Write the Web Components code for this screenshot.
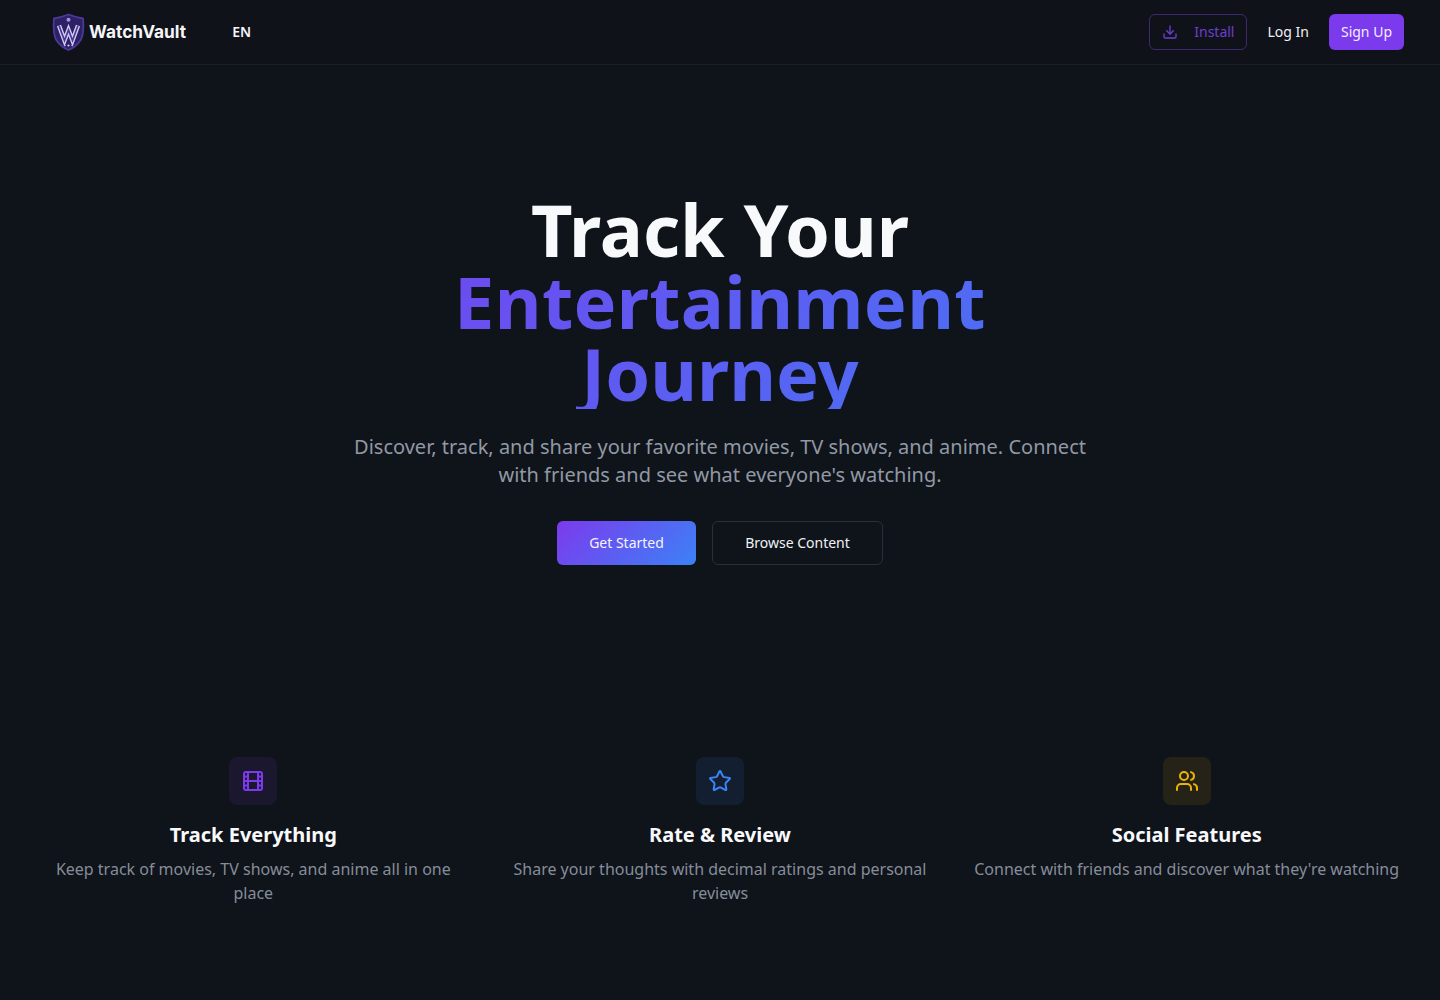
<!DOCTYPE html>
<html lang="en"><head><meta charset="utf-8"><title>WatchVault</title>
<style>
html,body{margin:0;background:#0f131a;color:#fff;font-family:"Noto Sans",sans-serif}
body{min-height:1000px}
</style></head><body>
<wv-header></wv-header>
<wv-hero></wv-hero>
<wv-features>
<wv-feature tone="purple" icon="film" heading="Track Everything">Keep track of movies, TV shows, and anime all in one place</wv-feature>
<wv-feature tone="blue" icon="star" heading="Rate &amp; Review">Share your thoughts with decimal ratings and personal reviews</wv-feature>
<wv-feature tone="amber" icon="users" heading="Social Features">Connect with friends and discover what they're watching</wv-feature>
</wv-features>
<script>
const def=(n,html)=>customElements.define(n,class extends HTMLElement{constructor(){super();this.attachShadow({mode:'open'}).innerHTML=typeof html==='function'?html(this):html;}});
def('wv-header',`<style>
:host{display:flex;align-items:center;justify-content:space-between;height:64px;border-bottom:1px solid #1a1f27;padding:0 36px 0 52px;background:#10121a;font-size:14px;line-height:20px}
.l,.r{display:flex;align-items:center}
.logo{display:flex;align-items:center;gap:4px;font:700 17.3px/20px Inter,sans-serif;color:#f5f5f7;margin-top:-1px}
.logo svg{display:block}
.en{margin-left:46px;font-weight:600;color:#f5f5f7;font-size:14px;margin-top:-1px}
.btn{box-sizing:border-box;height:36px;display:flex;align-items:center;border-radius:6px;padding-bottom:1px}
.install{width:98px;border:1px solid #3b2a6e;color:#6d3fd0;padding:0 12px 1px 12px;justify-content:space-between}
.login{margin-left:8px;padding:0 12px 1px;color:#f0f0f3}
.signup{margin-left:8px;padding:0 12px 1px;background:#7c3aed;color:#f3edff}
</style>
<div class="l"><div class="logo"><svg width="33" height="38" viewBox="0 0 33 38"><path d="M16.500 1.500C20.500 3 25.500 4.500 31 5.500c.8 9 .6 15.500-2 21-2.800 4.500-7.500 8.500-12.500 10.500C11.500 35 6.800 31 4 26.500 1.400 21 1.200 14.500 2 5.500c5.500-1 10.500-2.500 14.500-4z" fill="#2d2064" stroke="#4a3a96" stroke-width="1.800"/><path d="M7 12.500l5.500 15 4-10.500 4 10.500 5.500-15" fill="none" stroke="#d5ccf3" stroke-width="4.400" stroke-linejoin="miter"/><path d="M7 12.500l5.500 15 4-10.500 4 10.500 5.500-15" fill="none" stroke="#4a3a96" stroke-width="1.700" stroke-linejoin="miter"/><circle cx="16.500" cy="6.800" r="2" fill="#a68ff0"/><circle cx="16.500" cy="32.500" r="1.100" fill="#d5ccf3"/><circle cx="13.500" cy="32.500" r=".6" fill="#a68ff0"/><circle cx="19.500" cy="32.500" r=".6" fill="#a68ff0"/></svg><span>WatchVault</span></div><span class="en">EN</span></div>
<div class="r"><div class="btn install"><svg width="16" height="16" viewBox="0 0 24 24" fill="none" stroke="#6d3fd0" stroke-width="2" stroke-linecap="round" stroke-linejoin="round"><path d="M12 15V3"/><path d="M21 15v4a2 2 0 0 1-2 2H5a2 2 0 0 1-2-2v-4"/><path d="m7 10 5 5 5-5"/></svg><span>Install</span></div><div class="btn login">Log In</div><div class="btn signup">Sign Up</div></div>`);
def('wv-hero',`<style>
:host{display:block;text-align:center;padding:128px 0 0;height:692px;box-sizing:border-box}
h1{margin:0 auto;font-size:72px;line-height:72px;font-weight:700;color:#f8f9fa}
h1 span{display:block;width:1152px;margin:0 auto;background:linear-gradient(135deg,#7c3aed,#3b82f6);-webkit-background-clip:text;background-clip:text;color:transparent}
h1 b{font-weight:inherit;letter-spacing:.33px}
p{margin:24px auto 0;width:768px;font-size:20px;line-height:28px;color:#9199a5}
.cta{display:flex;justify-content:center;gap:16px;margin-top:32px}
.b{box-sizing:border-box;height:44px;display:flex;align-items:center;justify-content:center;border-radius:6px;font-size:14px;line-height:20px;padding-bottom:1px}
.p{width:139px;background:linear-gradient(135deg,#7c3aed,#3b82f6);color:#f5f3ff}
.s{width:171px;border:1px solid #2a2f38;color:#f0f2f5}
</style>
<h1>Track Your<span><b>Entertainment</b><br>Journey</span></h1>
<p>Discover, track, and share your favorite movies, TV shows, and anime. Connect with friends and see what everyone's watching.</p>
<div class="cta"><div class="b p">Get Started</div><div class="b s">Browse Content</div></div>`);
def('wv-features',`<style>:host{display:grid;grid-template-columns:repeat(3,1fr);gap:32px;padding:0 36px}</style><slot></slot>`);
const icons={
film:'<rect width="18" height="18" x="3" y="3" rx="2"/><path d="M7 3v18M3 7.500h4M3 12h18M3 16.500h4M17 3v18M17 7.500h4M17 16.500h4"/>',
star:'<path d="M11.525 2.295a.53.53 0 0 1 .95 0l2.31 4.679a2.123 2.123 0 0 0 1.595 1.160l5.166.756a.53.53 0 0 1 .294.904l-3.736 3.638a2.123 2.123 0 0 0-.611 1.878l.882 5.140a.53.53 0 0 1-.771.560l-4.618-2.428a2.122 2.122 0 0 0-1.973 0L6.396 21.010a.53.53 0 0 1-.77-.560l.881-5.139a2.122 2.122 0 0 0-.611-1.879L2.160 9.795a.53.53 0 0 1 .294-.906l5.165-.755a2.122 2.122 0 0 0 1.597-1.160z"/>',
users:'<path d="M16 21v-2a4 4 0 0 0-4-4H6a4 4 0 0 0-4 4v2"/><path d="M16 3.128a4 4 0 0 1 0 7.744"/><path d="M22 21v-2a4 4 0 0 0-3-3.870"/><circle cx="9" cy="7" r="4"/>'};
const tones={purple:['rgba(124,58,237,.1)','#7c3aed'],blue:['rgba(59,130,246,.1)','#3b82f6'],amber:['rgba(234,179,8,.1)','#eab308']};
def('wv-feature',el=>{const t=tones[el.getAttribute('tone')];return `<style>
:host{display:flex;flex-direction:column;align-items:center;text-align:center}
.i{width:48px;height:48px;border-radius:8px;background:${t[0]};display:flex;align-items:center;justify-content:center}
h3{margin:16px 0 0;font-size:20px;line-height:28px;font-weight:700;color:#f8f9fa}
p{margin:8px 0 0;font-size:16px;line-height:24px;color:#868d99}
</style><div class="i"><svg width="24" height="24" viewBox="0 0 24 24" fill="none" stroke="${t[1]}" stroke-width="2" stroke-linecap="round" stroke-linejoin="round">${icons[el.getAttribute('icon')]}</svg></div><h3>${el.getAttribute('heading').replace('&','&amp;')}</h3><p><slot></slot></p>`});
</script>
</body></html>
